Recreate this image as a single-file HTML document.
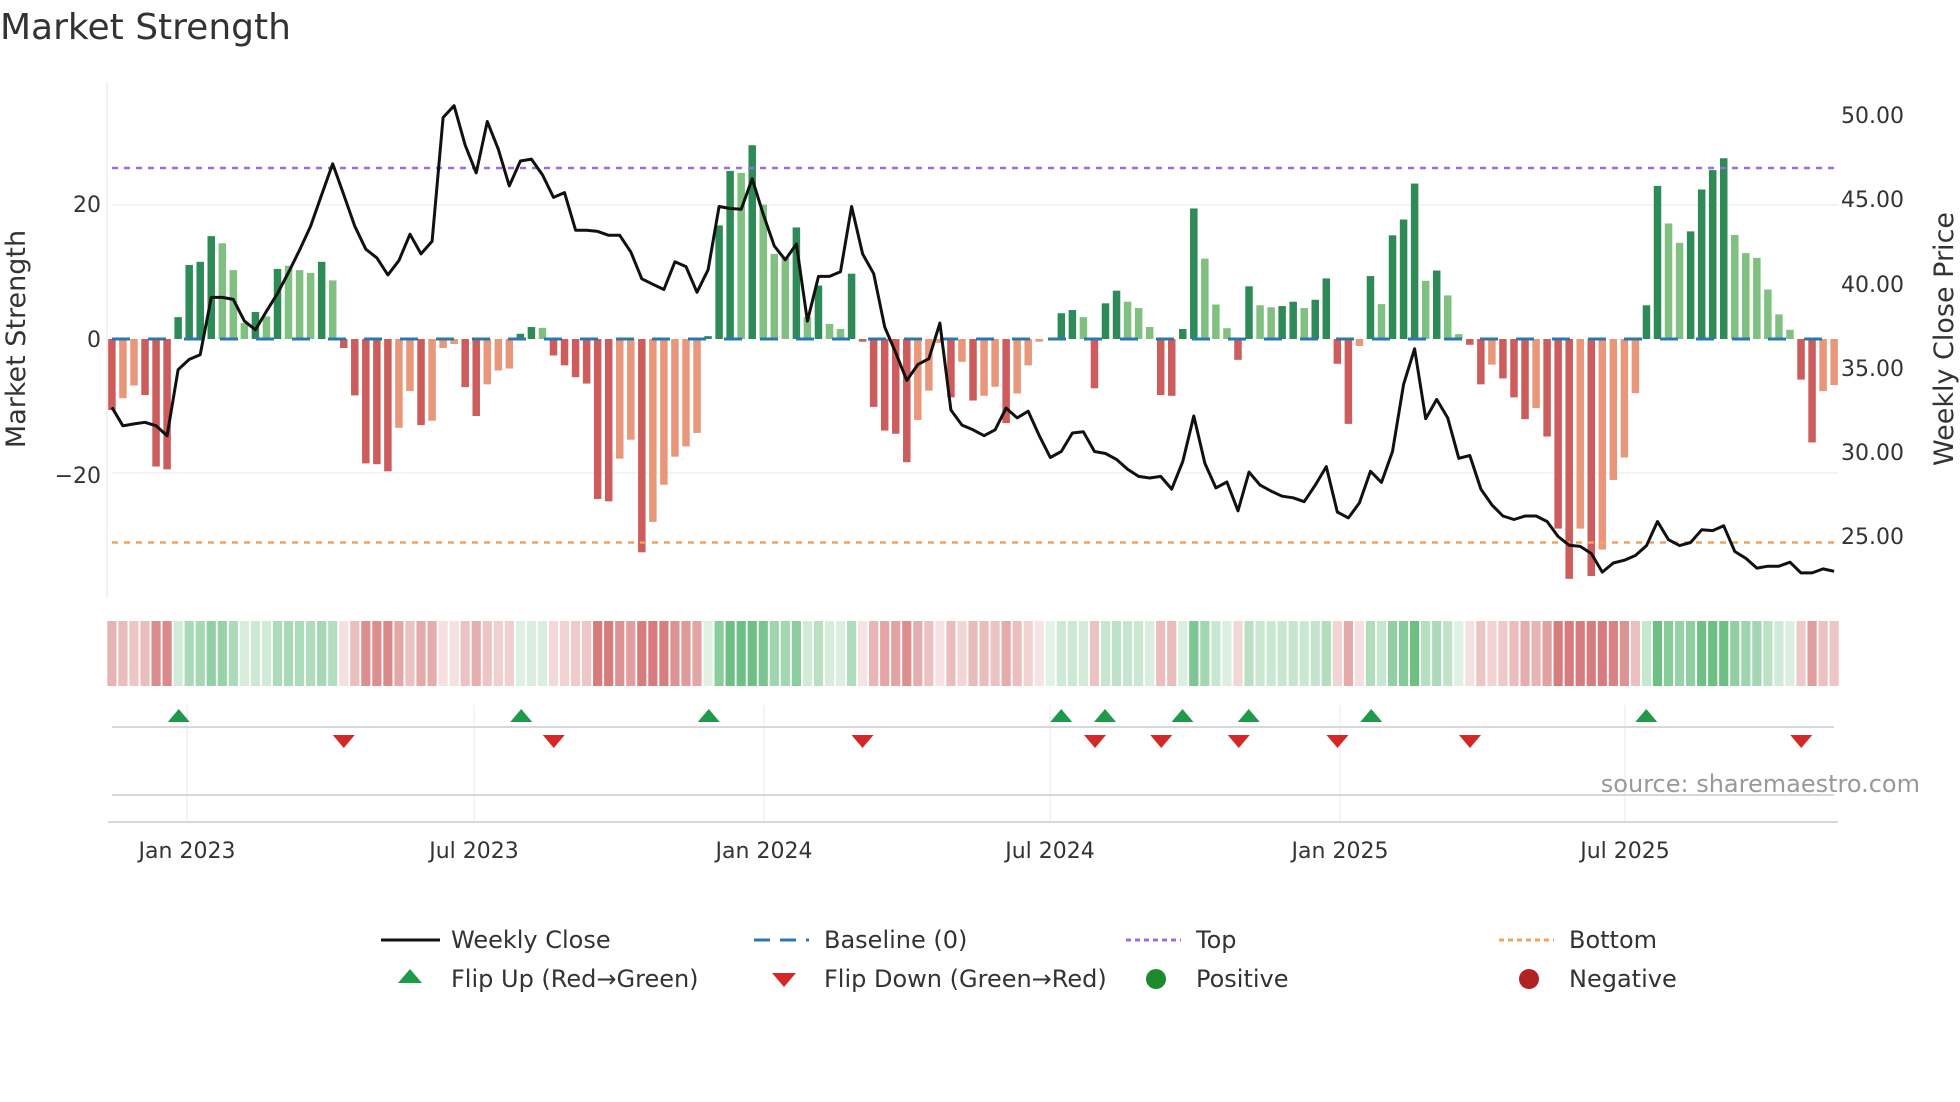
<!DOCTYPE html>
<html><head><meta charset="utf-8"><style>
html,body{margin:0;padding:0;background:#fff;}
svg{display:block;font-family:"DejaVu Sans","Liberation Sans",sans-serif;}
</style></head><body>
<svg id="s" width="1960" height="1102" viewBox="0 0 1960 1102" xmlns="http://www.w3.org/2000/svg">
<rect width="1960" height="1102" fill="#fff"/>
<text x="0" y="39" font-size="36" fill="#333">Market Strength</text>
<line x1="107" y1="82" x2="107" y2="598" stroke="#eceef3" stroke-width="1.5"/>
<line x1="112" y1="205" x2="1838" y2="205" stroke="#eef0f5" stroke-width="1.5"/>
<line x1="112" y1="473" x2="1838" y2="473" stroke="#eef0f5" stroke-width="1.5"/>
<g id="bars"></g>
<line x1="112" y1="168" x2="1838" y2="168" stroke="#9d6fdc" stroke-width="2.5" stroke-dasharray="6,6"/>
<line x1="112" y1="542.5" x2="1838" y2="542.5" stroke="#f0a35e" stroke-width="2.5" stroke-dasharray="6,6"/>
<line x1="112" y1="339" x2="1838" y2="339" stroke="#2a78b0" stroke-width="3" stroke-dasharray="18,18"/>
<polyline id="price" fill="none" stroke="#111" stroke-width="3" stroke-linejoin="round"/>
<g font-size="22" fill="#333">
<text x="101" y="212" text-anchor="end">20</text>
<text x="101" y="347" text-anchor="end">0</text>
<text x="101" y="483" text-anchor="end">−20</text>
<text x="1841" y="123">50.00</text>
<text x="1841" y="207">45.00</text>
<text x="1841" y="292">40.00</text>
<text x="1841" y="376">35.00</text>
<text x="1841" y="460">30.00</text>
<text x="1841" y="544">25.00</text>
</g>
<text transform="translate(25,339) rotate(-90)" font-size="27" fill="#333" text-anchor="middle">Market Strength</text>
<text transform="translate(1953,339) rotate(-90)" font-size="27" fill="#333" text-anchor="middle">Weekly Close Price</text>
<g id="heat"></g>
<g stroke="#eef0f5" stroke-width="1.5">
<line x1="187" y1="705" x2="187" y2="822"/><line x1="474" y1="705" x2="474" y2="822"/>
<line x1="764" y1="705" x2="764" y2="822"/><line x1="1050" y1="705" x2="1050" y2="822"/>
<line x1="1340" y1="705" x2="1340" y2="822"/><line x1="1625" y1="705" x2="1625" y2="822"/>
</g>
<line x1="112" y1="727" x2="1834" y2="727" stroke="#ccc" stroke-width="1.5"/>
<line x1="112" y1="795" x2="1834" y2="795" stroke="#ccc" stroke-width="1.5"/>
<line x1="108" y1="822" x2="1838" y2="822" stroke="#ccc" stroke-width="1.5"/>
<g id="tri"></g>
<text x="1920" y="792" font-size="24" fill="#999" text-anchor="end">source: sharemaestro.com</text>
<g font-size="22" fill="#333" text-anchor="middle">
<text x="187" y="858">Jan 2023</text><text x="474" y="858">Jul 2023</text>
<text x="764" y="858">Jan 2024</text><text x="1050" y="858">Jul 2024</text>
<text x="1340" y="858">Jan 2025</text><text x="1625" y="858">Jul 2025</text>
</g>
<g font-size="24" fill="#333">
<line x1="381" y1="940" x2="440" y2="940" stroke="#111" stroke-width="3"/>
<text x="451" y="948">Weekly Close</text>
<line x1="754" y1="940" x2="809" y2="940" stroke="#2a78b0" stroke-width="3" stroke-dasharray="16,10"/>
<text x="824" y="948">Baseline (0)</text>
<line x1="1126" y1="940" x2="1181" y2="940" stroke="#9d6fdc" stroke-width="3" stroke-dasharray="5,4"/>
<text x="1196" y="948">Top</text>
<line x1="1499" y1="940" x2="1554" y2="940" stroke="#f0a35e" stroke-width="3" stroke-dasharray="5,4"/>
<text x="1569" y="948">Bottom</text>
<polygon points="410,969 398,983 422,983" fill="#1f9a4a"/>
<text x="451" y="987">Flip Up (Red→Green)</text>
<polygon points="772,973 796,973 784,987" fill="#d62728"/>
<text x="824" y="987">Flip Down (Green→Red)</text>
<circle cx="1156" cy="979" r="10" fill="#1e8a2e"/>
<text x="1196" y="987">Positive</text>
<circle cx="1529" cy="979" r="10" fill="#b22222"/>
<text x="1569" y="987">Negative</text>
</g>
</svg>
<script>
var B=[[835,'R'],[805,'O'],[773,'O'],[797,'R'],[978,'R'],[985,'R'],[600,'G'],[468,'G'],[460,'G'],[395,'G'],[413,'L'],[481,'L'],[615,'L'],[587,'G'],[598,'L'],[478,'G'],[470,'L'],[481,'L'],[488,'L'],[460,'G'],[507,'L'],[678,'R'],[798,'R'],[970,'R'],[972,'R'],[990,'R'],[880,'O'],[787,'O'],[873,'R'],[862,'O'],[678,'O'],[668,'O'],[777,'R'],[850,'R'],[770,'O'],[735,'O'],[730,'O'],[642,'G'],[625,'G'],[627,'L'],[697,'R'],[722,'R'],[752,'R'],[768,'R'],[1060,'R'],[1066,'R'],[958,'O'],[910,'O'],[1195,'R'],[1118,'O'],[1024,'O'],[953,'O'],[927,'O'],[893,'O'],[648,'G'],[368,'G'],
[230,'G'],[235,'L'],[165,'G'],[315,'L'],[440,'L'],[450,'L'],[373,'G'],[600,'L'],[520,'G'],[617,'L'],[630,'L'],[490,'G'],[662,'R'],[827,'R'],[887,'R'],[895,'R'],[967,'R'],[860,'O'],[786,'O'],[665,'O'],[803,'R'],[713,'O'],[811,'R'],[799,'O'],[776,'O'],[868,'R'],[793,'O'],[722,'O'],[662,'O'],[655,'O'],[590,'G'],[582,'G'],[600,'L'],[780,'R'],[565,'G'],[533,'G'],[561,'L'],[577,'L'],[625,'L'],[797,'R'],[799,'R'],[630,'G'],[325,'G'],[452,'L'],[568,'L'],[628,'L'],[708,'R'],[522,'G'],[570,'L'],[575,'L'],[572,'G'],[561,'G'],[577,'L'],[556,'G'],
[502,'G'],[718,'R'],[870,'R'],[673,'O'],[496,'G'],[567,'L'],[393,'G'],[353,'G'],[262,'G'],[508,'L'],[482,'G'],[545,'L'],[643,'L'],[670,'R'],[770,'R'],[720,'O'],[755,'R'],[803,'R'],[858,'R'],[830,'O'],[902,'R'],[1135,'R'],[1262,'R'],[1135,'O'],[1255,'R'],[1188,'O'],[1012,'O'],[955,'O'],[792,'O'],[570,'G'],[268,'G'],[363,'L'],[412,'L'],[383,'G'],[277,'G'],[228,'G'],[198,'G'],[392,'L'],[438,'L'],[450,'L'],[530,'L'],[593,'L'],[632,'L'],[758,'R'],[917,'R'],[787,'O'],[772,'O']];
var P=[828,875,870,866,875,900,733,707,695,550,550,555,610,632,585,540,487,430,370,290,212,290,370,428,450,493,457,390,440,408,95,65,165,235,105,175,268,205,200,240,297,285,380,380,383,393,393,435,503,517,530,460,472,537,480,320,
325,327,250,340,420,455,415,610,497,497,485,320,440,490,625,690,760,720,705,615,835,873,885,900,885,830,855,838,900,955,940,893,890,940,945,960,985,1003,1007,1003,1035,965,850,970,1032,1017,1090,992,1025,1040,1053,1057,1067,1025,
978,1093,1108,1070,990,1018,940,770,680,857,808,855,957,950,1035,1075,1103,1112,1103,1103,1117,1155,1177,1180,1198,1245,1222,1215,1203,1178,1117,1163,1178,1170,1138,1140,1128,1193,1210,1235,1230,1230,1220,1247,1247,1237,1243];
var C={R:'#cd5c5c',O:'#e9977a',G:'#2e8b57',L:'#80c080'};
var NS='http://www.w3.org/2000/svg';
function el(t,a,p){var e=document.createElementNS(NS,t);for(var k in a)e.setAttribute(k,a[k]);document.getElementById(p).appendChild(e);return e;}
var x0=111.9,dx=11.04,z=339,pts=[];
for(var k=0;k<B.length;k++){
 var x=x0+dx*k,y=80+B[k][0]/2.53,v=(z-y)/6.75;
 el('rect',{x:x-3.75,y:Math.min(y,z),width:7.5,height:Math.abs(z-y),fill:C[B[k][1]]},'bars');
 var a=Math.min(1,0.2+Math.abs(v)/28);
 var col=v>=0?'rgb(60,170,90)':'rgb(200,80,80)';
 if(Math.abs(v)<0.3)a=0.2;
 el('rect',{x:x-4.6,y:621,width:9.2,height:65,fill:col,'fill-opacity':a*0.75},'heat');
}
for(var k=0;k<P.length;k++){pts.push((x0+dx*k).toFixed(1)+','+(80+P[k]/2.53).toFixed(1));}
document.getElementById('price').setAttribute('points',pts.join(' '));
var up=[143,417,567,849,884,946,999,1097,1317],dn=[275,443,690,876,929,991,1070,1176,1441];
up.forEach(function(d){var x=d*1.25;el('polygon',{points:(x)+',709 '+(x-11)+',722 '+(x+11)+',722',fill:'#1f9a4a'},'tri');});
dn.forEach(function(d){var x=d*1.25;el('polygon',{points:(x-11)+',735 '+(x+11)+',735 '+x+',748',fill:'#d62728'},'tri');});
</script>
</body></html>
